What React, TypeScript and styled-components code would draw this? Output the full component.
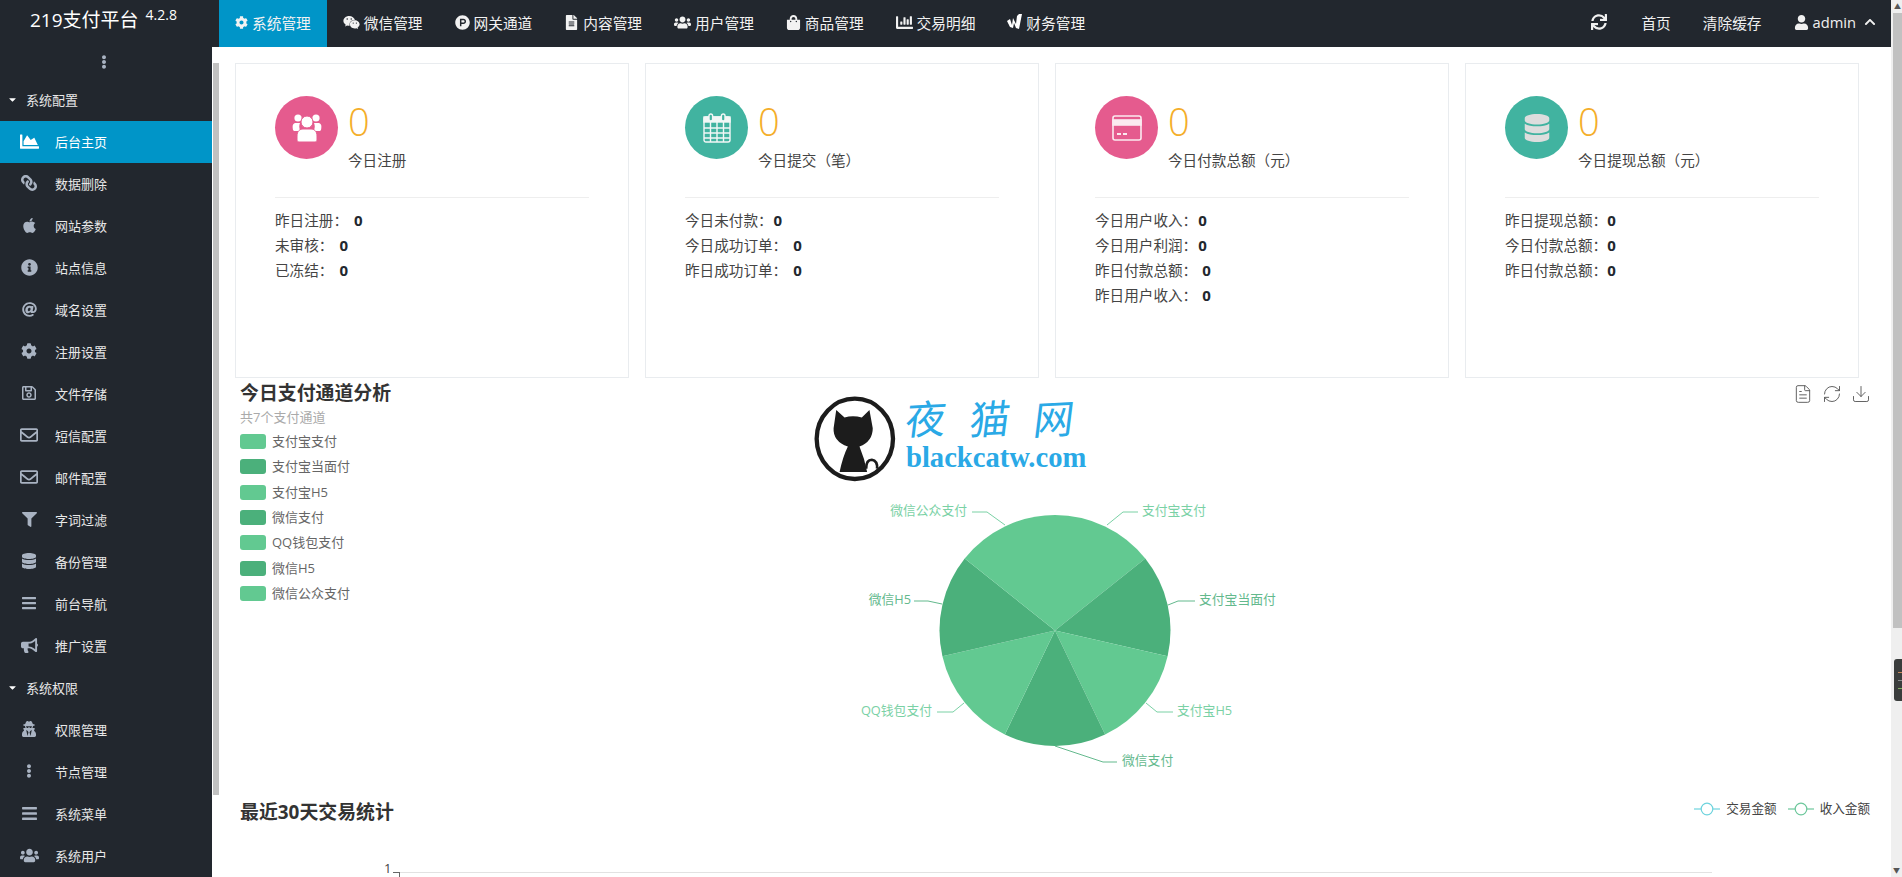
import React from "react";
import styled, { createGlobalStyle } from "styled-components";
import {
  FaCog, FaWeixin, FaProductHunt, FaFileAlt, FaUsers, FaShoppingBag, FaChartBar,
  FaChartArea, FaLink, FaApple, FaInfoCircle, FaAt, FaRegSave, FaRegEnvelope, FaFilter,
  FaDatabase, FaBars, FaBullhorn, FaUserSecret, FaEllipsisV, FaSync, FaUser, FaChevronUp, FaCaretDown,
} from "react-icons/fa";
import { FileText, RefreshCw, Download } from "lucide-react";

const FONT = `"Open Sans", "Noto Sans CJK SC", sans-serif`;

const Global = createGlobalStyle`
  html, body { margin: 0; padding: 0; height: 100%; overflow: hidden; background: #fff; }
  body { font-family: ${FONT}; }
  #root { height: 100%; }
`;

const Page = styled.div`
  display: flex;
  width: 1902px;
  height: 877px;
  overflow: hidden;
`;
const Frame = styled.div`
  width: 1891px;
  display: flex;
  flex-direction: column;
`;
const PageScroll = styled.div`
  position: relative;
  width: 11px;
  background: #efefef;
  padding-left: 2px;
  box-sizing: border-box;
`;
const ScrollArrow = styled.div`
  height: 13px;
  display: flex;
  align-items: center;
  justify-content: center;
  color: #555;
  font-size: 7px;
  line-height: 1;
`;
const PageThumb = styled.div`
  height: 615px;
  background: #c1c1c1;
`;
const DarkTab = styled.div`
  position: absolute;
  right: 0;
  top: 659px;
  width: 8px;
  height: 42px;
  background: #3a3d3c;
  border-radius: 3px 0 0 3px;
  display: flex;
  flex-direction: column;
  justify-content: center;
  gap: 7px;
  align-items: flex-end;
`;
const TabLine = styled.i<{ $c: string }>`
  display: block;
  width: 4px;
  height: 1px;
  background: ${(p) => p.$c};
`;
const BottomArrow = styled(ScrollArrow)`
  position: absolute;
  left: 0;
  right: 0;
  bottom: 0;
`;

const TopBar = styled.header`
  height: 47px;
  flex: none;
  display: flex;
  background: #22272e;
  color: #f0f0f0;
`;
const Brand = styled.div`
  width: 219px;
  flex: none;
  box-sizing: border-box;
  padding: 6px 0 0 30px;
  font-size: 19px;
  line-height: 28px;
  color: #fff;
  white-space: nowrap;
`;
const Version = styled.sup`
  font-size: 14px;
  line-height: 14px;
  vertical-align: 7px;
  margin-left: 7px;
`;
const NavList = styled.nav`
  display: flex;
  flex: 1;
`;
const NavItem = styled.a<{ $active?: boolean }>`
  display: flex;
  align-items: center;
  gap: 4px;
  padding: 0 16px 3px;
  font-size: 14.7px;
  white-space: nowrap;
  background: ${(p) => (p.$active ? "#0095c8" : "transparent")};
  color: #f2f2f2;
  & svg { flex: none; }
`;
const NavRight = styled.div`
  display: flex;
  align-items: center;
  padding: 0 15px 3px 0;
  font-size: 14.7px;
  white-space: nowrap;
`;
const NavRefresh = styled.span`
  display: flex;
  margin-right: 34px;
`;
const NavLink = styled.span`
  margin-right: 32px;
`;
const UserBox = styled.span`
  display: flex;
  align-items: center;
  gap: 4px;
`;
const ChevronBox = styled.span`
  display: flex;
  margin-left: 4px;
`;

const Body = styled.div`
  flex: 1;
  display: flex;
  min-height: 0;
`;
const Sidebar = styled.aside`
  width: 212px;
  flex: none;
  background: #22272e;
  color: #e8e8e8;
  overflow: hidden;
`;
const DotsRow = styled.div`
  height: 32px;
  box-sizing: border-box;
  display: flex;
  align-items: center;
  justify-content: center;
  padding: 0 4px 2px 0;
  color: #a9b3c2;
`;
const Section = styled.div`
  height: 42px;
  box-sizing: border-box;
  display: flex;
  align-items: center;
  padding: 0 0 2px 7px;
  font-size: 13px;
  color: #e8e8e8;
  & svg { width: 11px; height: 11px; margin-right: 8px; color: #fff; }
`;
const Item = styled.a<{ $active?: boolean }>`
  height: 42px;
  box-sizing: border-box;
  display: flex;
  align-items: center;
  padding: 0 0 2px 16px;
  font-size: 13px;
  gap: 13px;
  color: ${(p) => (p.$active ? "#fff" : "#e8e8e8")};
  background: ${(p) => (p.$active ? "#0095c8" : "transparent")};
`;
const ItemIcon = styled.span<{ $active?: boolean; $flip?: boolean }>`
  width: 26px;
  display: flex;
  justify-content: center;
  color: ${(p) => (p.$active ? "#fff" : "#a9b3c2")};
  transform: ${(p) => (p.$flip ? "scaleX(-1)" : "none")};
`;
const SideScroll = styled.div`
  width: 7px;
  flex: none;
  background: #fff;
  padding-left: 1px;
  box-sizing: border-box;
`;
const SideThumb = styled.div`
  margin-top: 16px;
  height: 732px;
  background: #c1c1c1;
`;

const Main = styled.main`
  flex: 1;
  position: relative;
  min-width: 0;
  overflow: hidden;
  background: #fff;
  padding: 16px 16px 0;
  box-sizing: border-box;
`;
const Cards = styled.div`
  display: grid;
  grid-template-columns: repeat(4, 394px);
  gap: 16px;
`;
const Card = styled.section`
  height: 315px;
  box-sizing: border-box;
  border: 1px solid #e9ecef;
  padding: 32px 39px 0;
`;
const CardHead = styled.div`
  display: flex;
  gap: 10px;
  height: 76px;
`;
const Circle = styled.div<{ $c: string }>`
  width: 63px;
  height: 63px;
  flex: none;
  border-radius: 50%;
  background: ${(p) => p.$c};
  display: flex;
  align-items: center;
  justify-content: center;
`;
const StatNumber = styled.div`
  font-size: 38px;
  font-weight: 300;
  line-height: 50px;
  color: #f4ae2b;
`;
const StatLabel = styled.div`
  font-size: 14.6px;
  line-height: 25px;
  margin-top: 2px;
  color: #444;
  white-space: nowrap;
`;
const Divider = styled.hr`
  margin: 25px 0 10px;
  border: 0;
  border-top: 1px solid #eeeeee;
  width: 314px;
`;
const Row = styled.div`
  font-size: 14.6px;
  line-height: 25px;
  color: #444;
  white-space: nowrap;
`;
const RowValue = styled.b<{ $gap: number }>`
  margin-left: ${(p) => p.$gap}px;
  font-family: "Open Sans", sans-serif;
  font-size: 15px;
  font-weight: 700;
  color: #22272e;
`;

const Analysis = styled.section`
  height: 419px;
  display: flex;
  padding-left: 5px;
`;
const AnalysisLeft = styled.div`
  width: 560px;
  flex: none;
`;
const Title = styled.h2`
  margin: 0;
  font-size: 18.9px;
  line-height: 30px;
  font-weight: 700;
  color: #333;
  white-space: nowrap;
`;
const Subtitle = styled.div`
  font-size: 13px;
  line-height: 19px;
  color: #aaa;
`;
const LegendList = styled.ul`
  list-style: none;
  margin: 2px 0 0;
  padding: 0;
`;
const LegendItem = styled.li`
  display: flex;
  align-items: center;
  gap: 6px;
  height: 25.3px;
  font-size: 13px;
  color: #666;
  & span { position: relative; top: -1px; }
`;
const Swatch = styled.i<{ $c: string }>`
  width: 26px;
  height: 15px;
  border-radius: 3px;
  background: ${(p) => p.$c};
`;
const PieSvg = styled.svg`
  flex: none;
  display: block;
  margin-top: -1px;
`;
const PieLabel = styled.text`
  font-family: ${FONT};
  font-size: 12.8px;
`;
const Toolbox = styled.div`
  margin-left: auto;
  padding: 6px 4px 0 0;
  display: flex;
  gap: 9px;
  height: 20px;
  color: #555;
`;

const TrendHead = styled.div`
  display: flex;
  justify-content: space-between;
  align-items: center;
  height: 30px;
  padding: 0 5px;
`;
const LineLegend = styled.div`
  display: flex;
  align-items: center;
  gap: 11px;
  font-size: 12.6px;
  color: #444;
  margin-top: -9px;
`;
const LineLegendItem = styled.span`
  display: flex;
  align-items: center;
  gap: 6px;
  & svg { margin-top: 3px; }
`;
const AxisRow = styled.div`
  margin: 33px 0 0 147px;
`;

const Watermark = styled.div`
  position: absolute;
  left: 594px;
  top: 348px;
  display: flex;
  gap: 10px;
  pointer-events: none;
`;
const MarkText = styled.div`
  display: flex;
  flex-direction: column;
  color: #2aa9e6;
`;
const MarkCn = styled.div`
  display: flex;
  gap: 24px;
  font-size: 40px;
  line-height: 48px;
  font-weight: 400;
  & span { display: block; transform: skewX(-10deg) rotate(-3deg); }
`;
const MarkEn = styled.div`
  font-family: "Liberation Serif", serif;
  font-size: 28.6px;
  font-weight: 700;
  line-height: 30px;
  white-space: nowrap;
`;

const UsersGlyph = () => (
  <svg width="30" height="30" viewBox="0 0 30 30" fill="#fff">
    <circle cx="6" cy="5" r="3.6" />
    <circle cx="24" cy="5" r="3.6" />
    <path d="M1 17c-1-5 0-7 3-7h4c-1 2-1 5 0 7v1H2z" />
    <path d="M29 17c1-5 0-7-3-7h-4c1 2 1 5 0 7v1h6z" />
    <circle cx="15" cy="9" r="6" stroke="#e55b8e" strokeWidth="1" />
    <path d="M7 29c-1 0-2-1-2-2v-4c0-5 3-7 6-7h8c3 0 6 2 6 7v4c0 1-1 2-2 2z" stroke="#e55b8e" strokeWidth="1" />
  </svg>
);
const CalendarGlyph = () => (
  <svg width="28" height="30" viewBox="0 0 28 30" fill="none" stroke="#f2f7f6" strokeWidth="1.4">
    <rect x="1" y="4" width="26" height="25" rx="2" />
    <rect x="1" y="4" width="26" height="5" fill="#f2f7f6" />
    <rect x="6" y="1" width="3.6" height="7" rx="1.8" fill="#41b3a0" />
    <rect x="18.4" y="1" width="3.6" height="7" rx="1.8" fill="#41b3a0" />
    <path d="M1 15h26M1 20h26M1 25h26M7.5 9v20M14 9v20M20.5 9v20" />
  </svg>
);
const CardGlyph = () => (
  <svg width="30" height="26" viewBox="0 0 30 26" fill="none" stroke="#fbeaf0" strokeWidth="1.6">
    <rect x="1" y="1" width="28" height="24" rx="2" />
    <rect x="1" y="5" width="28" height="5" fill="#fbeaf0" />
    <path d="M5 19h4M11 19h4" strokeWidth="2" />
  </svg>
);
const DbGlyph = () => <FaDatabase size={28} color="#dddddd" />;

const FinanceGlyph = () => (
  <svg width="15" height="16" viewBox="0 0 15 16" fill="#fff">
    <path d="M0 7l3-2 2 6 1-7 3 6 1-8 2-2h3l-3 15-3-1-2-5-1 5-3-1z" />
  </svg>
);

const navs = [
  { label: "系统管理", icon: <FaCog size={13} />, active: true },
  { label: "微信管理", icon: <FaWeixin size={17} /> },
  { label: "网关通道", icon: <FaProductHunt size={15} /> },
  { label: "内容管理", icon: <FaFileAlt size={15} /> },
  { label: "用户管理", icon: <FaUsers size={17} /> },
  { label: "商品管理", icon: <FaShoppingBag size={15} /> },
  { label: "交易明细", icon: <FaChartBar size={17} /> },
  { label: "财务管理", icon: <FinanceGlyph /> },
];

const sideA = [
  { label: "后台主页", icon: <FaChartArea size={19} />, active: true },
  { label: "数据删除", icon: <FaLink size={16} />, flip: true },
  { label: "网站参数", icon: <FaApple size={17} /> },
  { label: "站点信息", icon: <FaInfoCircle size={17} /> },
  { label: "域名设置", icon: <FaAt size={15} /> },
  { label: "注册设置", icon: <FaCog size={16} /> },
  { label: "文件存储", icon: <FaRegSave size={16} /> },
  { label: "短信配置", icon: <FaRegEnvelope size={18} /> },
  { label: "邮件配置", icon: <FaRegEnvelope size={18} /> },
  { label: "字词过滤", icon: <FaFilter size={15} /> },
  { label: "备份管理", icon: <FaDatabase size={16} /> },
  { label: "前台导航", icon: <FaBars size={16} /> },
  { label: "推广设置", icon: <FaBullhorn size={17} /> },
];
const sideB = [
  { label: "权限管理", icon: <FaUserSecret size={16} /> },
  { label: "节点管理", icon: <FaEllipsisV size={14} /> },
  { label: "系统菜单", icon: <FaBars size={17} /> },
  { label: "系统用户", icon: <FaUsers size={19} /> },
];

const PINK = "#e55b8e";
const TEAL = "#41b3a0";
const cards = [
  {
    color: PINK, glyph: <UsersGlyph />, label: "今日注册",
    rows: [["昨日注册：", 6], ["未审核：", 6], ["已冻结：", 6]],
  },
  {
    color: TEAL, glyph: <CalendarGlyph />, label: "今日提交（笔）",
    rows: [["今日未付款：", 1], ["今日成功订单：", 6], ["昨日成功订单：", 6]],
  },
  {
    color: PINK, glyph: <CardGlyph />, label: "今日付款总额（元）",
    rows: [["今日用户收入：", 1], ["今日用户利润：", 1], ["昨日付款总额：", 5], ["昨日用户收入：", 5]],
  },
  {
    color: TEAL, glyph: <DbGlyph />, label: "今日提现总额（元）",
    rows: [["昨日提现总额：", 0], ["今日付款总额：", 0], ["昨日付款总额：", 0]],
  },
] as { color: string; glyph: React.ReactNode; label: string; rows: [string, number][] }[];

const LIGHT = "#62c991";
const DARK = "#4bb07b";
const LIGHT_TEXT = "#7ad1a5";
const DARK_TEXT = "#63b98d";
const channels = [
  { name: "支付宝支付", c: LIGHT, t: LIGHT_TEXT, line: "1107,525 1123,512 1138,512", x: 1142, y: 511, anchor: "start" },
  { name: "支付宝当面付", c: DARK, t: DARK_TEXT, line: "1168,605 1178,601 1195,601", x: 1199, y: 600, anchor: "start" },
  { name: "支付宝H5", c: LIGHT, t: LIGHT_TEXT, line: "1146,703 1157,712 1173,712", x: 1177, y: 711, anchor: "start" },
  { name: "微信支付", c: DARK, t: DARK_TEXT, line: "1055,746 1103,762 1117,762", x: 1122, y: 761, anchor: "start" },
  { name: "QQ钱包支付", c: LIGHT, t: LIGHT_TEXT, line: "964,703 953,712 937,712", x: 932, y: 711, anchor: "end" },
  { name: "微信H5", c: DARK, t: DARK_TEXT, line: "942,604 928,601 914,601", x: 911, y: 600, anchor: "end" },
  { name: "微信公众支付", c: LIGHT, t: LIGHT_TEXT, line: "1005,525 987,512 972,512", x: 967, y: 511, anchor: "end" },
];

const CX = 1055;
const CY = 630.5;
const R = 115.5;
const slicePath = (i: number) => {
  const a0 = (i * 2 * Math.PI) / 7;
  const a1 = ((i + 1) * 2 * Math.PI) / 7;
  const p = (a: number) => `${CX + R * Math.sin(a)} ${CY - R * Math.cos(a)}`;
  return `M${CX} ${CY}L${p(a0)}A${R} ${R} 0 0 1 ${p(a1)}Z`;
};

const LineMark = ({ c }: { c: string }) => (
  <svg width="26" height="14" viewBox="0 0 26 14" fill="none" stroke={c} strokeWidth="1.2">
    <path d="M0 7h26" />
    <circle cx="13" cy="7" r="5.8" fill="#fff" />
  </svg>
);

const AxisText = styled.text`
  font-family: ${FONT};
  font-size: 13px;
  fill: #444;
`;

export default function App() {
  return (
    <Page>
      <Global />
      <Frame>
        <TopBar>
          <Brand>
            219支付平台<Version>4.2.8</Version>
          </Brand>
          <NavList>
            {navs.map((n) => (
              <NavItem key={n.label} $active={n.active}>
                {n.icon}
                {n.label}
              </NavItem>
            ))}
          </NavList>
          <NavRight>
            <NavRefresh>
              <FaSync size={16} />
            </NavRefresh>
            <NavLink>首页</NavLink>
            <NavLink>清除缓存</NavLink>
            <UserBox>
              <FaUser size={15} />
              admin
              <ChevronBox>
                <FaChevronUp size={12} />
              </ChevronBox>
            </UserBox>
          </NavRight>
        </TopBar>
        <Body>
          <Sidebar>
            <DotsRow>
              <FaEllipsisV size={14} />
            </DotsRow>
            <Section>
              <FaCaretDown />
              系统配置
            </Section>
            {sideA.map((s) => (
              <Item key={s.label} $active={s.active}>
                <ItemIcon $active={s.active} $flip={s.flip}>
                  {s.icon}
                </ItemIcon>
                {s.label}
              </Item>
            ))}
            <Section>
              <FaCaretDown />
              系统权限
            </Section>
            {sideB.map((s) => (
              <Item key={s.label}>
                <ItemIcon>{s.icon}</ItemIcon>
                {s.label}
              </Item>
            ))}
          </Sidebar>
          <SideScroll>
            <SideThumb />
          </SideScroll>
          <Main>
            <Cards>
              {cards.map((c) => (
                <Card key={c.label}>
                  <CardHead>
                    <Circle $c={c.color}>{c.glyph}</Circle>
                    <div>
                      <StatNumber>0</StatNumber>
                      <StatLabel>{c.label}</StatLabel>
                    </div>
                  </CardHead>
                  <Divider />
                  {c.rows.map(([label, gap]) => (
                    <Row key={label}>
                      {label}
                      <RowValue $gap={gap}>0</RowValue>
                    </Row>
                  ))}
                </Card>
              ))}
            </Cards>
            <Analysis>
              <AnalysisLeft>
                <Title>今日支付通道分析</Title>
                <Subtitle>共7个支付通道</Subtitle>
                <LegendList>
                  {channels.map((c) => (
                    <LegendItem key={c.name}>
                      <Swatch $c={c.c} />
                      <span>{c.name}</span>
                    </LegendItem>
                  ))}
                </LegendList>
              </AnalysisLeft>
              <PieSvg width="500" height="420" viewBox="800 377 500 420">
                {channels.map((c, i) => (
                  <path key={c.name} d={slicePath(i)} fill={c.c} />
                ))}
                {channels.map((c) => (
                  <g key={c.name}>
                    <polyline points={c.line} fill="none" stroke={c.t} strokeWidth="1" />
                    <PieLabel x={c.x} y={c.y + 4} fill={c.t} textAnchor={c.anchor}>
                      {c.name}
                    </PieLabel>
                  </g>
                ))}
              </PieSvg>
              <Toolbox>
                <FileText size={20} strokeWidth={1.1} />
                <RefreshCw size={20} strokeWidth={1.1} />
                <Download size={20} strokeWidth={1.1} />
              </Toolbox>
            </Analysis>
            <TrendHead>
              <Title>最近30天交易统计</Title>
              <LineLegend>
                <LineLegendItem>
                  <LineMark c="#6dd3dd" />
                  交易金额
                </LineLegendItem>
                <LineLegendItem>
                  <LineMark c="#6cc79b" />
                  收入金额
                </LineLegendItem>
              </LineLegend>
            </TrendHead>
            <AxisRow>
              <svg width="1340" height="20" viewBox="382 860 1340 20">
                <AxisText x="384" y="873">1</AxisText>
                <path d="M393 872.5h6M399 872.5h1313" stroke="#e2e2e2" strokeWidth="1" fill="none" />
                <path d="M399.5 872v8" stroke="#666" strokeWidth="1" fill="none" />
                <path d="M393 872.5h6" stroke="#666" strokeWidth="1" fill="none" />
              </svg>
            </AxisRow>
            <Watermark>
              <svg width="83" height="88" viewBox="95 40 250 265">
                <ellipse cx="221" cy="172" rx="115" ry="121" fill="#fff" stroke="#1c1c1c" strokeWidth="13" />
                <path d="M165 85L190 108Q215 100 242 108L265 85L275 140Q275 180 235 195Q250 230 258 272L175 272Q185 225 200 195Q155 180 157 140Z" fill="#1c1c1c" />
                <path d="M255 262Q255 235 272 235Q290 238 288 262" fill="none" stroke="#1c1c1c" strokeWidth="8" />
              </svg>
              <MarkText>
                <MarkCn>
                  <span>夜</span>
                  <span>猫</span>
                  <span>网</span>
                </MarkCn>
                <MarkEn>blackcatw.com</MarkEn>
              </MarkText>
            </Watermark>
          </Main>
        </Body>
      </Frame>
      <PageScroll>
        <ScrollArrow>▲</ScrollArrow>
        <PageThumb />
        <DarkTab>
          <TabLine $c="#c98a5a" />
          <TabLine $c="#8a8f8f" />
          <TabLine $c="#7fae5f" />
        </DarkTab>
        <BottomArrow>▼</BottomArrow>
      </PageScroll>
    </Page>
  );
}
